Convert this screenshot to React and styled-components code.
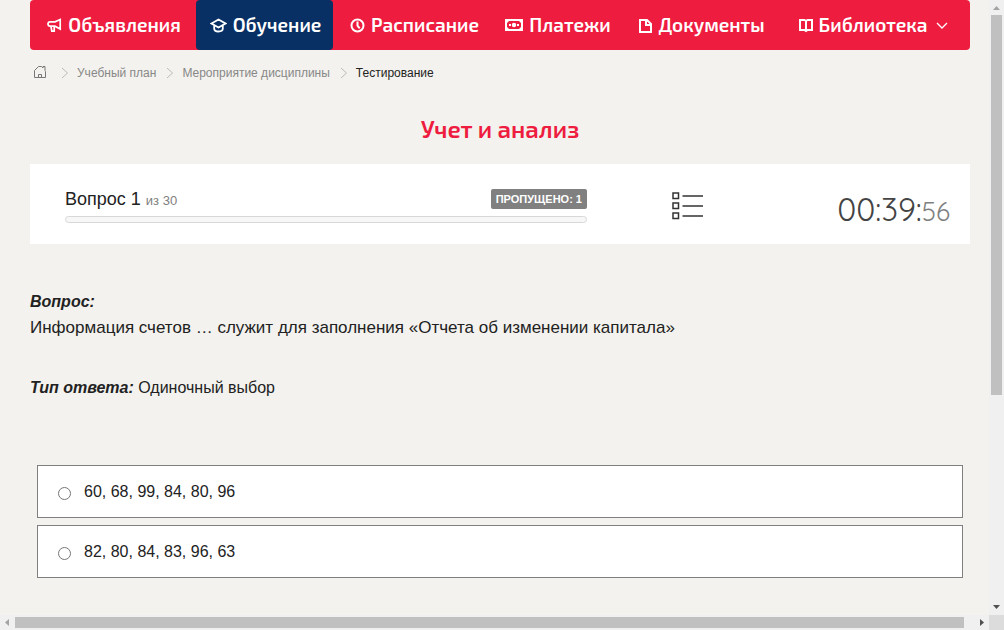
import React, { useState } from "react";
import styled, { createGlobalStyle } from "styled-components";

const GlobalStyle = createGlobalStyle`
  * {
    box-sizing: border-box;
  }
  body {
    margin: 0;
    background: #f3f2ee;
    color: #222;
    font-family: "Liberation Sans", Arial, sans-serif;
    font-size: 16px;
  }
`;

const Window = styled.div`
  display: grid;
  grid-template-columns: minmax(0, 1fr) 15px;
  grid-template-rows: minmax(0, 1fr) 15px;
  height: 100vh;
`;
const Page = styled.div`
  overflow: hidden;
  padding: 0 19px 0 30px;
`;

const Nav = styled.nav`
  display: grid;
  grid-template-columns: 166fr 137fr 161fr 126fr 162fr 182fr;
  height: 50px;
  padding-right: 6px;
  border-radius: 4px;
  background: #ee1c3f;
`;
const NavLink = styled.a`
  display: flex;
  align-items: center;
  justify-content: center;
  gap: 6px;
  padding-left: 2px;
  border-radius: 4px;
  background: ${(props) => (props.$active ? "#083064" : "transparent")};
  color: #fff;
  font: 600 19px/24px "Exo 2", Roboto, sans-serif;
  text-decoration: none;
  white-space: nowrap;
  svg {
    flex: none;
  }
`;
const MenuArrow = styled.svg`
  width: 14px;
  height: 8px;
  margin-left: 2px;
`;

const Breadcrumbs = styled.nav`
  display: flex;
  align-items: center;
  height: 46px;
  padding-left: 3px;
  font-size: 12px;
  a {
    display: flex;
    color: #888;
    text-decoration: none;
  }
`;
const HomeLink = styled.a`
  padding-bottom: 2px;
`;
const Separator = styled.svg`
  width: 8px;
  height: 12px;
  margin: 0 8px 0 ${(props) => (props.$wide ? 14 : 10)}px;
`;

const Title = styled.h1`
  margin: 17px 0 20px;
  color: #ee1c3f;
  font: 600 24px/31px "Exo 2", Roboto, sans-serif;
  text-align: center;
`;

const StatusCard = styled.section`
  display: grid;
  grid-template-columns: 522fr 202fr 161fr;
  align-items: center;
  height: 80px;
  padding: 4px 20px 0 35px;
  background: #fff;
`;
const ProgressHead = styled.div`
  display: flex;
  align-items: center;
  justify-content: space-between;
  height: 20px;
  margin-bottom: 7px;
  font-size: 18px;
  small {
    color: #808080;
    font-size: 13px;
  }
`;
const Skipped = styled.span`
  padding: 0 5px;
  border-radius: 2px;
  background: #808080;
  color: #fff;
  font-size: 11px;
  font-weight: bold;
  line-height: 20px;
`;
const Track = styled.div`
  height: 7px;
  border: 1px solid #d8d8d8;
  border-radius: 4px;
  background: #f7f7f7;
`;
const ListButton = styled.button`
  justify-self: center;
  display: flex;
  padding: 0;
  border: 0;
  background: none;
`;
const Timer = styled.time`
  padding-top: 8px;
  color: #444;
  font: 400 32px/40px Quicksand, Lato, sans-serif;
  text-align: right;
  white-space: nowrap;
  span {
    color: #808080;
    font-size: 26px;
  }
`;

const Label = styled.strong`
  font-style: italic;
`;
const Question = styled.section`
  margin-top: 45px;
  line-height: 26px;
  p {
    margin: 0 0 34px;
    font-size: 17px;
  }
`;
const Options = styled.div`
  display: grid;
  gap: 7px;
  margin: 64px 7px 0;
`;
const Option = styled.label`
  display: flex;
  align-items: center;
  gap: 13px;
  height: 53px;
  padding: 0 20px;
  border: 1px solid #808080;
  background: #fff;
  input {
    width: 13px;
    height: 13px;
    margin: 4px 0 0;
  }
`;

const Scrollbar = styled.div`
  display: flex;
  flex-direction: ${(props) => (props.$vertical ? "column" : "row")};
  align-items: center;
  justify-content: space-between;
  background: #f0f0f0;
  svg {
    flex: none;
  }
`;
const ScrollTrack = styled.div`
  display: flex;
  flex: 1;
  flex-direction: ${(props) => (props.$vertical ? "column" : "row")};
  width: ${(props) => (props.$vertical ? "11px" : "auto")};
  height: ${(props) => (props.$vertical ? "auto" : "11px")};
`;
const Thumb = styled.div`
  flex: 0 0 ${(props) => props.$size};
  background: #c0c0c0;
`;
const Corner = styled.div`
  background: #dcdcdc;
`;

const stroke = { fill: "none", stroke: "currentColor", strokeWidth: 2 };

const icons = {
  megaphone: (
    <svg width="15" height="15" viewBox="0 0 15 15" {...stroke} strokeWidth="1.7">
      <path d="M8 3.8H3.2a2.2 2.2 0 0 0 0 4.400H8L13.2 11V1.500zM4 8.500l.8 4.700h2.400V8.500" />
    </svg>
  ),
  cap: (
    <svg width="17" height="15" viewBox="0 0 17 15" {...stroke} strokeWidth="1.8">
      <path d="M1.500 5.500 8.500 1.500l7 4-7 4zM4.200 7.500v3.300q0 2.700 4.300 2.700t4.300-2.700V7.500" />
    </svg>
  ),
  clock: (
    <svg width="15" height="15" viewBox="0 0 15 15" {...stroke}>
      <circle cx="7.5" cy="7.5" r="6" />
      <path d="M7.5 3.5v4.2l2.2 2.6" />
    </svg>
  ),
  money: (
    <svg width="18" height="12" viewBox="0 0 18 12" fill="currentColor">
      <path
        fillRule="evenodd"
        d="M0 0h18v12H0zM4 2 2 4v4l2 2h10l2-2V4l-2-2z"
      />
      <circle cx="9" cy="6" r="2.2" />
      <path d="M4 5h2v2H4zM12 5h2v2h-2z" />
    </svg>
  ),
  file: (
    <svg width="13" height="15" viewBox="0 0 13 15" {...stroke}>
      <path d="M1 2h7l4 4v8H1zM7 2v5h5" />
    </svg>
  ),
  book: (
    <svg width="14" height="15" viewBox="0 0 14 15" {...stroke}>
      <path d="M7 3 5.5 2H1v10h4.5L7 13l1.5-1H13V2H8.5zM7 2.5V14" />
    </svg>
  ),
};

const links = [
  { icon: "megaphone", text: "Объявления" },
  { icon: "cap", text: "Обучение", active: true },
  { icon: "clock", text: "Расписание" },
  { icon: "money", text: "Платежи" },
  { icon: "file", text: "Документы" },
  { icon: "book", text: "Библиотека", menu: true },
];

const answers = ["60, 68, 99, 84, 80, 96", "82, 80, 84, 83, 96, 63"];

const Chevron = ({ wide }) => (
  <Separator $wide={wide} viewBox="0 0 8 12" fill="none" stroke="#bbb">
    <path d="m1 1 5.5 5L1 11" />
  </Separator>
);

const HomeIcon = () => (
  <svg width="14" height="14" viewBox="0 0 14 14" fill="none" stroke="#777">
    <path d="M1.5 12.5v-7l4-4h3L10 3V1.5h2v4l.5 1v6zM5.5 12.5v-3h3v3" />
  </svg>
);

const ListIcon = () => (
  <svg width="32" height="28" viewBox="0 0 32 28" fill="none" stroke="#333">
    <path
      strokeWidth="1.5"
      d="M1 1h5.5v5.5H1zM1 11h5.5v5.5H1zM1 21h5.5v5.5H1zM10.5 4H31M10.5 14H31M10.5 24H31"
    />
  </svg>
);

const Arrow = ({ d, color = "#505050" }) => (
  <svg width="15" height="15" viewBox="0 0 15 15" fill={color}>
    <path d={d} />
  </svg>
);

export default function App() {
  const [answer, setAnswer] = useState(null);
  return (
    <Window>
      <GlobalStyle />
      <Page>
        <Nav>
          {links.map((link) => (
            <NavLink href="#" key={link.text} $active={link.active}>
              {icons[link.icon]}
              {link.text}
              {link.menu && (
                <MenuArrow viewBox="0 0 14 8" {...stroke} strokeWidth="1.3">
                  <path d="m2 2 5 5 5-5" />
                </MenuArrow>
              )}
            </NavLink>
          ))}
        </Nav>
        <Breadcrumbs>
          <HomeLink href="#" aria-label="Главная">
            <HomeIcon />
          </HomeLink>
          <Chevron wide />
          <a href="#">Учебный план</a>
          <Chevron />
          <a href="#">Мероприятие дисциплины</a>
          <Chevron />
          <span>Тестирование</span>
        </Breadcrumbs>
        <Title>Учет и анализ</Title>
        <StatusCard>
          <div>
            <ProgressHead>
              <span>
                Вопрос 1 <small>из 30</small>
              </span>
              <Skipped>ПРОПУЩЕНО: 1</Skipped>
            </ProgressHead>
            <Track />
          </div>
          <ListButton aria-label="Список вопросов">
            <ListIcon />
          </ListButton>
          <Timer>
            00:39:<span>56</span>
          </Timer>
        </StatusCard>
        <Question>
          <Label>Вопрос:</Label>
          <p>
            Информация счетов … служит для заполнения «Отчета об изменении
            капитала»
          </p>
          <Label>Тип ответа:</Label> Одиночный выбор
        </Question>
        <Options>
          {answers.map((text) => (
            <Option key={text}>
              <input
                type="radio"
                name="answer"
                checked={answer === text}
                onChange={() => setAnswer(text)}
              />
              {text}
            </Option>
          ))}
        </Options>
      </Page>
      <Scrollbar $vertical>
        <Arrow d="M4 10h7L7.5 6z" color="#a3a3a3" />
        <ScrollTrack $vertical>
          <Thumb $size="65%" />
        </ScrollTrack>
        <Arrow d="M4 5h7L7.5 9z" />
      </Scrollbar>
      <Scrollbar>
        <Arrow d="M9 4v7L5 7.5z" color="#a3a3a3" />
        <ScrollTrack>
          <Thumb $size="99%" />
        </ScrollTrack>
        <Arrow d="M6 4v7L10 7.5z" />
      </Scrollbar>
      <Corner />
    </Window>
  );
}
